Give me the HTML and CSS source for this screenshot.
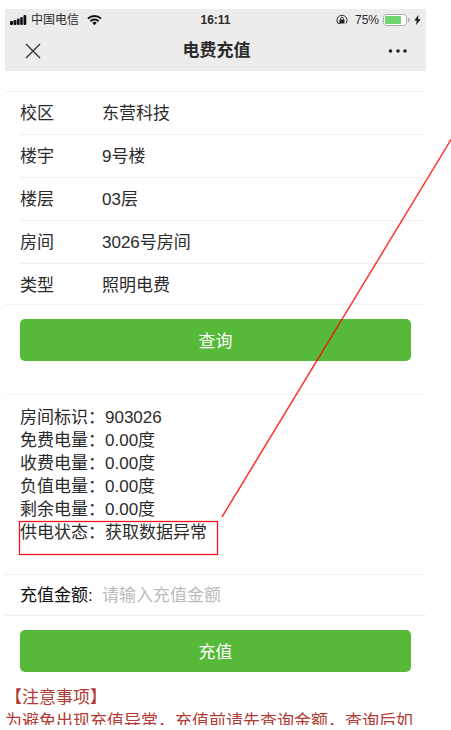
FILE: index.html
```html
<!DOCTYPE html>
<html lang="zh-CN">
<head>
  <meta charset="UTF-8">
  <meta name="viewport" content="width=device-width, initial-scale=1.0">
  <title>电费充值</title>
  <link rel="stylesheet" href="styles.css">
</head>
<body>
  <div class="phone">
    <header class="header">
      <!-- Status bar -->
      <div class="status">
        <div class="status-left">
          <svg width="17" height="12" viewBox="0 0 17 12" fill="#111">
            <rect x="0" y="7" width="3" height="4" rx="1"/>
            <rect x="3.5" y="6" width="3" height="5" rx="1"/>
            <rect x="7" y="4.500" width="2.600" height="6.500" rx="1"/>
            <rect x="10.200" y="3" width="2.600" height="8" rx="1"/>
            <rect x="13.500" y="1" width="2.800" height="10" rx="1"/>
          </svg>
          <span>中国电信</span>
          <svg class="wifi" width="15" height="12" viewBox="0 0 15 12" fill="none" stroke="#111" stroke-width="2">
            <path d="M1 4.600a9.300 9.300 0 0 1 13 0"/>
            <path d="M3.400 7.200a5.900 5.900 0 0 1 8.200 0"/>
            <path d="M5.300 8.800a3.200 3.200 0 0 1 4.400 0L7.500 11.200z" fill="#111" stroke="none"/>
          </svg>
        </div>
        <div class="time">16:11</div>
        <div class="status-right">
          <svg width="12" height="12" viewBox="0 0 12 12" fill="none" stroke="#333">
            <path d="M2.200 9.500a5 5 0 1 1 7.600 0"/>
            <path d="M1 7.500l1.400 2.200 2.200-.8"/>
            <rect x="3.500" y="5.500" width="5" height="4" rx=".6" fill="#222" stroke="none"/>
            <path d="M4.600 6V4.600a1.400 1.400 0 0 1 2.800 0V6"/>
          </svg>
          <span>75%</span>
          <svg width="27" height="12" viewBox="0 0 27 12">
            <rect x=".5" y=".5" width="23" height="11" rx="3" fill="#fff" stroke="#aaa"/>
            <rect x="2" y="2" width="16" height="8" rx="1" fill="#6fd66f"/>
            <path d="M25 3.500c2 .8 2 4.200 0 5z" fill="#aaa"/>
          </svg>
          <svg width="7" height="12" viewBox="0 0 7 12" fill="#111">
            <path d="M4.500 1L.3 6.600h2.500L2 11l4.700-5.800H4z"/>
          </svg>
        </div>
      </div>
      <!-- Title bar -->
      <div class="nav">
        <button class="icon-btn" type="button" aria-label="关闭">
          <svg width="16" height="16" viewBox="0 0 16 16" fill="none" stroke="#333" stroke-width="1.400">
            <path d="M1 1l14 14M15 1L1 15"/>
          </svg>
        </button>
        <h1 class="title">电费充值</h1>
        <button class="icon-btn" type="button" aria-label="更多">
          <svg width="20" height="16" viewBox="0 0 20 16" fill="#222">
            <circle cx="2.500" cy="8" r="1.800"/>
            <circle cx="10" cy="8" r="1.800"/>
            <circle cx="17" cy="8" r="1.800"/>
          </svg>
        </button>
      </div>
    </header>

    <main>
      <dl class="list">
        <div class="row"><dt>校区</dt><dd>东营科技</dd></div>
        <div class="row"><dt>楼宇</dt><dd>9号楼</dd></div>
        <div class="row"><dt>楼层</dt><dd>03层</dd></div>
        <div class="row"><dt>房间</dt><dd>3026号房间</dd></div>
        <div class="row"><dt>类型</dt><dd>照明电费</dd></div>
      </dl>
      <button class="btn" type="button">查询</button>

      <ul class="info">
        <li>房间标识：903026</li>
        <li>免费电量：0.00度</li>
        <li>收费电量：0.00度</li>
        <li>负值电量：0.00度</li>
        <li>剩余电量：0.00度</li>
        <li>供电状态：获取数据异常</li>
      </ul>

      <div class="field">
        <label for="amount">充值金额:</label>
        <input id="amount" type="text" placeholder="请输入充值金额">
      </div>
      <button class="btn" type="button">充值</button>

      <section class="notice">
        <h2>【注意事项】</h2>
        <p>为避免出现充值异常，充值前请先查询金额，查询后如</p>
      </section>
    </main>
  </div>

  <!-- Red callout on the power status line -->
  <svg class="callout" width="451" height="730" viewBox="0 0 451 730" fill="none">
    <rect x="19.500" y="521.500" width="198" height="33" stroke="#f0141e" stroke-width="1.300"/>
    <path d="M222 517L452 138" stroke="#f00" stroke-opacity=".8" stroke-width="1.500"/>
  </svg>
</body>
</html>
```

FILE: styles.css
```css
* {
  margin: 0;
  padding: 0;
  box-sizing: border-box;
}
body {
  position: relative;
  padding: 9px 25px 5px 5px;
  background: #fff;
  color: #2b2b2b;
  font-family: "Liberation Sans", "Noto Sans CJK SC", sans-serif;
  font-size: 17px;
  line-height: 24px;
  overflow: hidden;
}
button, input {
  border: 0;
  background: none;
  font: inherit;
}
svg {
  display: block;
}

/* Header */
.header {
  background: #ececec;
}
.status {
  display: grid;
  grid-template-columns: 1fr auto 1fr;
  align-items: center;
  height: 21px;
  padding: 0 5px;
  font-size: 12px;
  line-height: 20px;
}
.status-left, .status-right {
  display: flex;
  align-items: center;
  gap: 4px;
}
.status-left .wifi {
  margin-left: 4px;
}
.status-right {
  justify-content: flex-end;
}
.status-right span {
  margin-left: 3px;
}
.time {
  font-weight: bold;
}
.nav {
  display: flex;
  align-items: center;
  justify-content: space-between;
  height: 41px;
  padding: 0 18px 0 20px;
}
.icon-btn {
  display: flex;
  width: 20px;
}
.title {
  font-size: 17px;
  font-weight: bold;
}

/* Room details */
.list {
  margin-top: 20px;
  border-top: 1px solid #f2f2f2;
  border-bottom: 1px solid #f2f2f2;
}
.row {
  display: flex;
  margin-left: 15px;
  padding: 10px 0 8px;
  border-bottom: 1px solid #efefef;
}
.row:last-child {
  padding-bottom: 6px;
  border-bottom: 0;
}
.row dt {
  width: 82px;
}

.btn {
  display: block;
  width: calc(100% - 30px);
  height: 42px;
  margin: 14px 15px;
  padding-top: 3px;
  border-radius: 5px;
  background: #56b937;
  color: #fff;
}

.info {
  margin-top: 33px;
  padding: 11px 15px 30px;
  border-top: 1px solid #f2f2f2;
  line-height: 23px;
  list-style: none;
}

/* Amount */
.field {
  display: flex;
  align-items: center;
  padding: 9px 15px 7px;
  border-top: 1px solid #efefef;
  border-bottom: 1px solid #efefef;
}
.field label {
  width: 82px;
  color: #111;
}
.field input {
  flex: 1;
  min-width: 0;
  height: 24px;
}
.field input::placeholder {
  color: #bbb;
}

/* Notice, cut at the bottom edge of the screen */
.notice {
  max-height: 39px;
  overflow: hidden;
  color: #b23a34;
  white-space: nowrap;
}
.notice h2 {
  font-size: 17px;
  font-weight: normal;
}

.callout {
  position: absolute;
  top: 0;
  left: 0;
  pointer-events: none;
}
```
